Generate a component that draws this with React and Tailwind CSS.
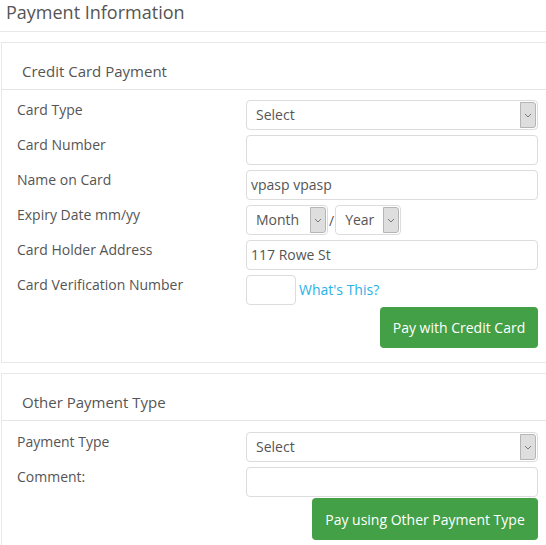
import React from "react";

const Chevron = () => (
  <svg width="8" height="5" viewBox="0 0 8 5" fill="none">
    <path d="M1 1l3 3 3-3" stroke="#777" strokeWidth="1" />
  </svg>
);

// fake select box with the grey arrow cell on the right
const SelectBox = ({ value, className }) => (
  <div className={`flex h-[30px] items-stretch rounded-[4px] border border-[#dcdcdc] bg-white ${className}`}>
    <span className="flex-1 pl-[9px] text-[14px] leading-[28px] text-[#555]">{value}</span>
    <span className="my-[1px] mr-[1px] flex w-[16px] items-center justify-center rounded-r-[3px] border border-[#b5b5b5] bg-[#dedede]">
      <Chevron />
    </span>
  </div>
);

const TextBox = ({ value = "", className = "w-full" }) => (
  <div className={`h-[30px] rounded-[4px] border border-[#dcdcdc] bg-white pl-[4px] text-[14px] leading-[28px] text-[#555] ${className}`}>
    {value}
  </div>
);

const Row = ({ label, children }) => (
  <div className="flex">
    <div className="w-[229px] shrink-0 text-[14px] leading-[20px] text-[#555]">{label}</div>
    <div className="w-[292px]">{children}</div>
  </div>
);

const PanelHead = ({ title }) => (
  <div className="h-[47px] border-b border-[#e5e5e5] pl-[20px] pt-[17px] text-[15px] leading-[22px] text-[#555]">
    {title}
  </div>
);

export default function App() {
  return (
    <div className="h-[545px] w-[546px] overflow-hidden bg-white font-['Open_Sans',sans-serif]">
      <div className="h-[32px] border-b border-[#e8e8e8] pl-[6px] pt-[1px] text-[18px] leading-[22px] text-[#555]">
        Payment Information
      </div>

      {/* credit card panel */}
      <div className="ml-[1px] mt-[10px] w-[560px] border border-[#e8e8e8]">
        <PanelHead title="Credit Card Payment" />
        <div className="flex flex-col gap-[5px] pl-[15px] pt-[10px]">
          <Row label="Card Type">
            <SelectBox value="Select" className="w-full" />
          </Row>
          <Row label="Card Number">
            <TextBox />
          </Row>
          <Row label="Name on Card">
            <TextBox value="vpasp vpasp" />
          </Row>
          <Row label="Expiry Date mm/yy">
            <div className="flex items-center">
              <SelectBox value="Month" className="w-[82px]" />
              <span className="mx-[1px] text-[14px] text-[#555]">/</span>
              <SelectBox value="Year" className="w-[66px]" />
            </div>
          </Row>
          <Row label="Card Holder Address">
            <TextBox value="117 Rowe St" />
          </Row>
          <Row label="Card Verification Number">
            <div className="flex items-center gap-[3px]">
              <TextBox className="w-[50px]" />
              <a className="text-[14px] leading-[20px] text-[#29b2e9]">What's This?</a>
            </div>
          </Row>
        </div>
        <div className="flex w-[536px] justify-end pb-[14px] pt-[2px]">
          <button className="h-[41px] w-[158px] rounded-[4px] bg-[#43a047] text-[14px] text-white">
            Pay with Credit Card
          </button>
        </div>
      </div>

      {/* other payment panel */}
      <div className="ml-[1px] mt-[10px] w-[560px] border border-[#e8e8e8] pb-[20px]">
        <PanelHead title="Other Payment Type" />
        <div className="flex flex-col gap-[5px] pl-[15px] pt-[11px]">
          <Row label="Payment Type">
            <SelectBox value="Select" className="w-full" />
          </Row>
          <Row label="Comment:">
            <TextBox />
          </Row>
        </div>
        <div className="flex w-[536px] justify-end pt-[1px]">
          <button className="h-[42px] w-[226px] rounded-[4px] bg-[#43a047] text-[14px] text-white">
            Pay using Other Payment Type
          </button>
        </div>
      </div>
    </div>
  );
}
